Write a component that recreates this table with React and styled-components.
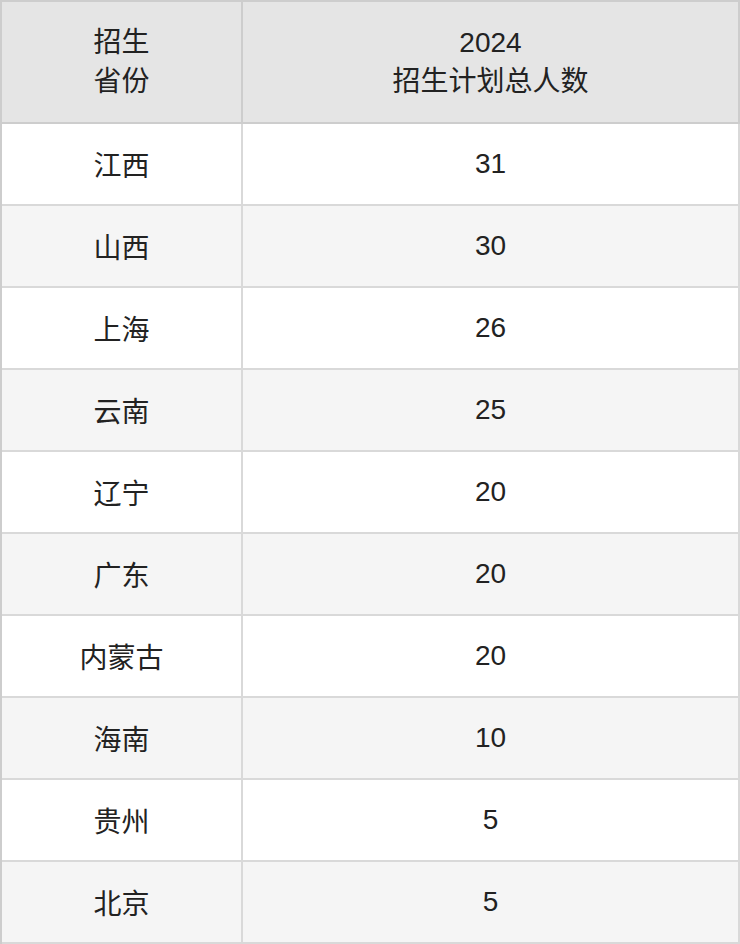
import React from "react";
import styled, { createGlobalStyle } from "styled-components";

const Global = createGlobalStyle`
  html, body { margin: 0; padding: 0; background: #ffffff; }
  * { box-sizing: border-box; }
`;

const Table = styled.div`
  width: 740px;
  display: grid;
  grid-template-columns: 241px 1fr;
  border-top: 2px solid #cdcdcd;
  border-left: 2px solid #cdcdcd;
  font-family: "Liberation Sans", "Noto Sans CJK SC", sans-serif;
  color: #222222;
  font-size: 28px;
`;

const HeadCell = styled.div`
  height: 122px;
  display: flex;
  align-items: center;
  justify-content: center;
  text-align: center;
  line-height: 39px;
  background: #e5e5e5;
  border-right: 2px solid #cdcdcd;
  border-bottom: 2px solid #cdcdcd;
`;

const Cell = styled.div`
  height: 82px;
  display: flex;
  align-items: center;
  justify-content: center;
  background: ${(p) => (p.$alt ? "#f5f5f5" : "#ffffff")};
  border-right: 2px solid #d9d9d9;
  border-bottom: 2px solid #d9d9d9;
`;

const rows = [
  ["江西", "31"],
  ["山西", "30"],
  ["上海", "26"],
  ["云南", "25"],
  ["辽宁", "20"],
  ["广东", "20"],
  ["内蒙古", "20"],
  ["海南", "10"],
  ["贵州", "5"],
  ["北京", "5"],
];

export default function App() {
  return (
    <>
      <Global />
      <Table>
        <HeadCell>
          招生
          <br />
          省份
        </HeadCell>
        <HeadCell>
          2024
          <br />
          招生计划总人数
        </HeadCell>
        {rows.map(([p, n], i) => (
          <React.Fragment key={p}>
            <Cell $alt={i % 2 === 1}>{p}</Cell>
            <Cell $alt={i % 2 === 1}>{n}</Cell>
          </React.Fragment>
        ))}
      </Table>
    </>
  );
}
